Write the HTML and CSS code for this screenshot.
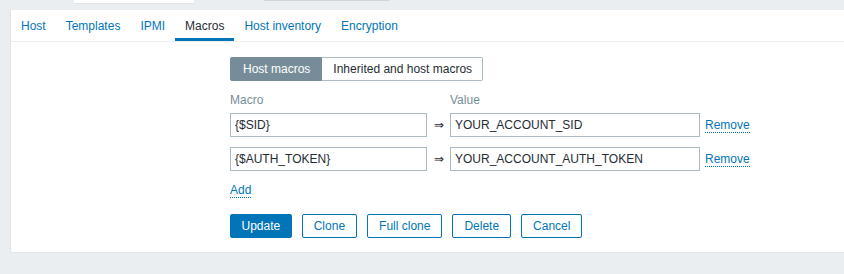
FILE: index.html
```html
<!DOCTYPE html>
<html lang="en">
<head>
    <meta charset="UTF-8">
    <meta name="viewport" content="width=device-width, initial-scale=1.0">
    <title>Host macros</title>
    <link rel="stylesheet" href="styles.css">
</head>
<body>
    <!-- bits of the header above, scrolled away -->
    <div class="top-strip">
        <div class="top-box"></div>
        <div class="top-bar"></div>
    </div>

    <div class="panel">
        <ul class="tabs">
            <li class="tab"><a href="#">Host</a></li>
            <li class="tab"><a href="#">Templates</a></li>
            <li class="tab"><a href="#">IPMI</a></li>
            <li class="tab active"><a href="#">Macros</a></li>
            <li class="tab"><a href="#">Host inventory</a></li>
            <li class="tab"><a href="#">Encryption</a></li>
        </ul>

        <div class="form">
            <div class="radio-list">
                <span class="radio active">Host macros</span>
                <span class="radio">Inherited and host macros</span>
            </div>

            <div class="macro-table">
                <div class="head">Macro</div>
                <div></div>
                <div class="head">Value</div>
                <div></div>

                <input class="text-field" type="text" value="{$SID}">
                <div class="arrow">&rArr;</div>
                <input class="text-field" type="text" value="YOUR_ACCOUNT_SID">
                <a class="link" href="#">Remove</a>

                <input class="text-field" type="text" value="{$AUTH_TOKEN}">
                <div class="arrow">&rArr;</div>
                <input class="text-field" type="text" value="YOUR_ACCOUNT_AUTH_TOKEN">
                <a class="link" href="#">Remove</a>
            </div>

            <div class="add-row">
                <a class="link" href="#">Add</a>
            </div>

            <div class="buttons">
                <button class="btn primary">Update</button>
                <button class="btn">Clone</button>
                <button class="btn">Full clone</button>
                <button class="btn">Delete</button>
                <button class="btn">Cancel</button>
            </div>
        </div>
    </div>
</body>
</html>
```

FILE: styles.css
```css
* {
    margin: 0;
    padding: 0;
    box-sizing: border-box;
}

body {
    background: #ebeef0;
    font-family: 'Liberation Sans', Arial, sans-serif;
    font-size: 12px;
    color: #1f2c33;
    overflow: hidden;
}

/* header leftovers */
.top-strip {
    height: 10px;
    display: flex;
    align-items: flex-start;
}

.top-box {
    margin-left: 74px;
    width: 120px;
    height: 4px;
    background: #fff;
    border-bottom: 1px solid #dfe4e7;
}

.top-bar {
    margin-left: 70px;
    width: 125px;
    height: 1px;
    background: #cfd6db;
}

/* main panel */
.panel {
    margin-left: 10px;
    width: 850px;
    background: #fff;
    border: 1px solid #dfe4e7;
    border-right: none;
    border-top: none;
    height: 243px;
}

.tabs {
    list-style: none;
    display: flex;
    height: 32px;
    border-bottom: 1px solid #ebeef0;
}

.tab a {
    display: block;
    height: 31px;
    padding: 1px 10px 0;
    line-height: 30px;
    color: #0275b8;
    text-decoration: none;
    border-bottom: 3px solid transparent;
}

.tab.active a {
    color: #1f2c33;
    border-bottom-color: #0275b8;
}

/* form */
.form {
    padding: 15px 0 0 219px;
}

.radio-list {
    display: flex;
    height: 24px;
}

.radio {
    display: block;
    height: 24px;
    line-height: 22px;
    padding: 0 10px 0 11px;
    border: 1px solid #acbbc2;
    color: #1f2c33;
}

.radio.active {
    background: #768d99;
    border-color: #768d99;
    color: #fff;
    border-radius: 2px 0 0 2px;
    padding: 0 11px 0 12px;
}

.radio:last-child {
    border-left: none;
    border-radius: 0 2px 2px 0;
}

.macro-table {
    display: grid;
    grid-template-columns: 197px 23px 250px auto;
    row-gap: 10px;
    align-items: center;
    margin-top: 12px;
}

.head {
    color: #768d99;
    line-height: 14px;
    margin-bottom: -4px;
}

.text-field {
    height: 24px;
    border: 1px solid #acbbc2;
    padding: 0 4px;
    font-family: inherit;
    font-size: 12px;
    color: #1f2c33;
    background: #fff;
    outline: none;
}

.arrow {
    text-align: center;
    font-size: 12px;
}

.link {
    color: #0275b8;
    text-decoration: none;
    border-bottom: 1px dotted #0275b8;
    margin-left: 5px;
    justify-self: start;
    line-height: 14px;
}

.add-row {
    margin-top: 12px;
    line-height: 14px;
}

.add-row .link {
    margin-left: 0;
}

.buttons {
    display: flex;
    gap: 10px;
    margin-top: 17px;
}

.btn {
    height: 24px;
    padding: 0 11px;
    border: 1px solid #0275b8;
    border-radius: 2px;
    background: #fff;
    color: #0275b8;
    font-family: inherit;
    font-size: 12px;
}

.btn.primary {
    padding: 0 10.5px;
    background: #0275b8;
    color: #fff;
}
```
